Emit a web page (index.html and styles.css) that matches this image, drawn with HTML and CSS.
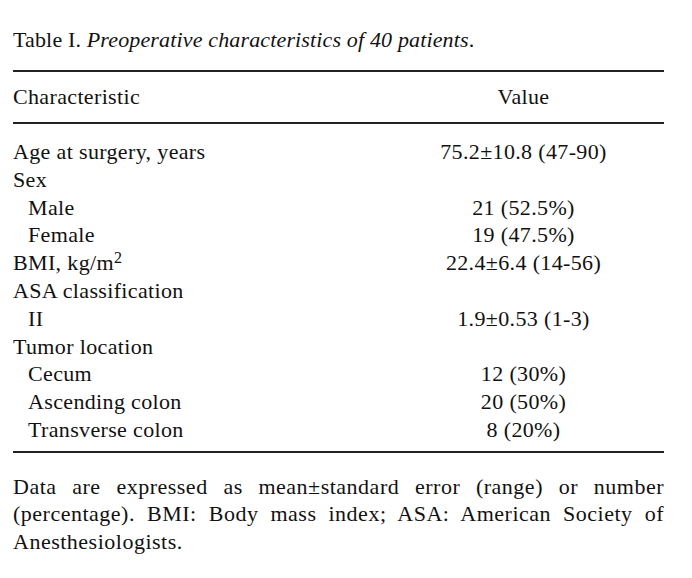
FILE: index.html
```html
<!DOCTYPE html>
<html>
<head>
<meta charset="utf-8">
<link rel="stylesheet" href="styles.css">
</head>
<body>
<div class="page">
  <p class="caption">Table I. <em>Preoperative characteristics of 40 patients</em>.</p>
  <table class="tbl">
    <colgroup><col class="col1"><col class="col2"></colgroup>
    <thead>
      <tr><th class="c1">Characteristic</th><th class="c2">Value</th></tr>
    </thead>
    <tbody>
      <tr class="first"><td class="c1">Age at surgery, years</td><td class="c2">75.2±10.8 (47-90)</td></tr>
      <tr><td class="c1">Sex</td><td class="c2"></td></tr>
      <tr><td class="c1 ind">Male</td><td class="c2">21 (52.5%)</td></tr>
      <tr><td class="c1 ind">Female</td><td class="c2">19 (47.5%)</td></tr>
      <tr><td class="c1">BMI, kg/m<sup>2</sup></td><td class="c2">22.4±6.4 (14-56)</td></tr>
      <tr><td class="c1">ASA classification</td><td class="c2"></td></tr>
      <tr><td class="c1 ind">II</td><td class="c2">1.9±0.53 (1-3)</td></tr>
      <tr><td class="c1">Tumor location</td><td class="c2"></td></tr>
      <tr><td class="c1 ind">Cecum</td><td class="c2">12 (30%)</td></tr>
      <tr><td class="c1 ind">Ascending colon</td><td class="c2">20 (50%)</td></tr>
      <tr class="last"><td class="c1 ind">Transverse colon</td><td class="c2">8 (20%)</td></tr>
    </tbody>
  </table>
  <p class="note">Data are expressed as mean±standard error (range) or number (percentage). BMI: Body mass index; ASA: American Society of Anesthesiologists.</p>
</div>
</body>
</html>
```
FILE: styles.css
```css
html, body {
  margin: 0;
  padding: 0;
  background: #ffffff;
}
body {
  font-family: "Liberation Serif", "Times New Roman", serif;
  font-size: 22px;
  color: #111111;
}
.page {
  width: 651px;
  padding: 26px 0 0 13px;
}
.caption {
  margin: 0;
  line-height: 28px;
  letter-spacing: 0.15px;
}
.tbl {
  width: 651px;
  table-layout: fixed;
  margin-top: 16px;
  border-collapse: collapse;
  border-top: 2px solid #222;
  border-bottom: 2px solid #222;
  letter-spacing: 0.35px;
}
.col1 {
  width: 370px;
}
.tbl th {
  font-weight: normal;
  height: 50px;
  padding: 0;
  border-bottom: 2px solid #222;
  line-height: 28px;
}
.tbl td {
  padding: 0;
  height: 27.8px;
  line-height: 27.8px;
  white-space: nowrap;
}
.c1 {
  text-align: left;
}
.c2 {
  text-align: center;
}
.ind {
  padding-left: 15px !important;
}
.tbl tr.first td {
  padding-top: 14px;
}
.tbl tr.last td {
  padding-bottom: 7px;
}
sup {
  font-size: 16px;
  line-height: 0;
  vertical-align: 7px;
}
.note {
  margin: 20px 0 0 0;
  line-height: 27.5px;
  text-align: justify;
  letter-spacing: 0.5px;
}
```
